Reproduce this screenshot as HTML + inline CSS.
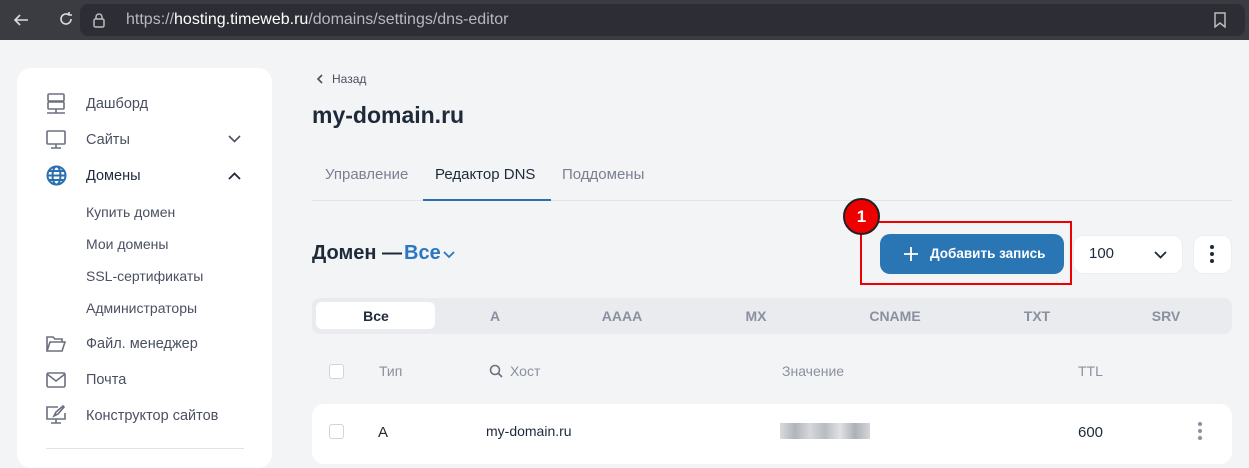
<!DOCTYPE html>
<html><head><meta charset="utf-8"><style>
*{margin:0;padding:0;box-sizing:border-box}
body{width:1249px;height:455px;overflow:hidden;background:#f3f4f6;font-family:"Liberation Sans",sans-serif;position:relative;color:#1e2a3a}
.bar{position:absolute;left:0;top:0;width:1249px;height:40px;background:#3b3b42}
.url{position:absolute;left:80px;top:4px;width:1165px;height:32px;background:#2d2d35;border-radius:8px;color:#b8b8c0;font-size:16px;line-height:32px;padding-left:46px}
.url b{color:#fff;font-weight:normal}
.a{position:absolute;white-space:nowrap}
.side{position:absolute;left:17px;top:68px;width:255px;height:400px;background:#fff;border-radius:14px}
.mi{position:absolute;left:86px;font-size:14.5px;color:#4a5060}
.sub{font-size:14px;color:#4a5060}
.ic{position:absolute;left:46px}
.tab{position:absolute;top:166px;font-size:15px;color:#7a8090}
.filt{position:absolute;left:312px;top:298px;width:920px;height:36px;background:#e9ebef;border-radius:8px}
.ft{position:absolute;top:308px;font-size:14px;color:#8a90a0;font-weight:bold;transform:translateX(-50%)}
.cb{position:absolute;width:15px;height:15px;border:1.5px solid #d0d4dc;border-radius:3px;background:#fff}
.hd{position:absolute;top:363px;font-size:14px;color:#8a90a0}
</style></head><body>
<div class="bar"></div>
<svg class="a" style="left:12px;top:11px" width="18" height="18" viewBox="0 0 18 18" fill="none" stroke="#ddd" stroke-width="1.6"><path d="M16 9H3M8 4L3 9l5 5"/></svg>
<svg class="a" style="left:57px;top:10px" width="18" height="18" viewBox="0 0 18 18" fill="none" stroke="#ddd" stroke-width="1.6"><path d="M14 9a5 5 0 1 1-2-4M12 2v3h3"/></svg>
<div class="url">https://<b>hosting.timeweb.ru</b>/domains/settings/dns-editor</div>
<svg class="a" style="left:92px;top:12px" width="14" height="16" viewBox="0 0 14 16" fill="none" stroke="#bbb" stroke-width="1.5"><rect x="2" y="7" width="10" height="8" rx="1.5"/><path d="M4 7V5a3 3 0 0 1 6 0v2"/></svg>
<svg class="a" style="left:1213px;top:12px" width="14" height="16" viewBox="0 0 14 16" fill="none" stroke="#bbb" stroke-width="1.5"><path d="M2 1h10v14l-5-4-5 4z"/></svg>

<div class="side"></div>
<svg class="ic" style="top:93px" width="20" height="22" viewBox="0 0 20 22" fill="none" stroke="#6a7080" stroke-width="1.6"><rect x="2" y="1" width="16" height="7" rx="1"/><rect x="2" y="9" width="16" height="7" rx="1"/><path d="M10 16v4M1 20h18"/></svg>
<div class="mi" style="top:96px">Дашборд</div>
<svg class="ic" style="top:130px" width="20" height="20" viewBox="0 0 20 20" fill="none" stroke="#6a7080" stroke-width="1.6"><rect x="1" y="1" width="18" height="13" rx="1"/><path d="M10 14v4M5 18h10"/></svg>
<div class="mi" style="top:132px">Сайты</div>
<svg class="a" style="left:228px;top:135px" width="13" height="8" viewBox="0 0 13 8" fill="none" stroke="#4a5060" stroke-width="1.6"><path d="M1 1l5.5 5.5L12 1"/></svg>
<svg class="ic" style="top:165px" width="21" height="21" viewBox="0 0 21 21" fill="none" stroke="#2a6fb0" stroke-width="2"><circle cx="10.5" cy="10.5" r="9"/><ellipse cx="10.5" cy="10.5" rx="4" ry="9"/><path d="M1.5 10.5h18M3 6h15M3 15h15"/></svg>
<div class="mi" style="top:168px;color:#1e2a3a">Домены</div>
<svg class="a" style="left:228px;top:172px" width="13" height="8" viewBox="0 0 13 8" fill="none" stroke="#1e2a3a" stroke-width="1.8"><path d="M1 7l5.5-5.5L12 7"/></svg>
<div class="mi sub" style="top:204px">Купить домен</div>
<div class="mi sub" style="top:236px">Мои домены</div>
<div class="mi sub" style="top:268px">SSL-сертификаты</div>
<div class="mi sub" style="top:300px">Администраторы</div>
<svg class="ic" style="top:335px" width="20" height="18" viewBox="0 0 20 18" fill="none" stroke="#6a7080" stroke-width="1.6"><path d="M1 16V2h6l2 2h7v3M1 16l3-9h15l-3 9z"/></svg>
<div class="mi" style="top:336px">Файл. менеджер</div>
<svg class="ic" style="top:372px" width="20" height="16" viewBox="0 0 20 16" fill="none" stroke="#6a7080" stroke-width="1.6"><rect x="1" y="1" width="18" height="14" rx="1.5"/><path d="M1 2l9 7 9-7"/></svg>
<div class="mi" style="top:372px">Почта</div>
<svg class="ic" style="top:405px" width="20" height="20" viewBox="0 0 20 20" fill="none" stroke="#6a7080" stroke-width="1.6"><path d="M12 2H1v12h18V8M10 14v4M5 18h10M8 11l2-4 7-6 1 1-6 7z"/></svg>
<div class="mi" style="top:408px">Конструктор сайтов</div>
<div class="a" style="left:46px;top:448px;width:198px;height:1px;background:#e0e2e6"></div>

<svg class="a" style="left:316px;top:74px" width="8" height="10" viewBox="0 0 8 10" fill="none" stroke="#4a5060" stroke-width="1.6"><path d="M6 1L2 5l4 4"/></svg>
<div class="a" style="left:332px;top:72px;font-size:12px;color:#4a5060">Назад</div>
<div class="a" style="left:312px;top:102px;font-size:23px;font-weight:bold;color:#1e2a3a">my-domain.ru</div>
<div class="tab" style="left:325px">Управление</div>
<div class="tab" style="left:435px;color:#1e2a3a">Редактор DNS</div>
<div class="tab" style="left:562px">Поддомены</div>
<div class="a" style="left:312px;top:200px;width:920px;height:1px;background:#e2e4e8"></div>
<div class="a" style="left:423px;top:199px;width:128px;height:2px;background:#2a6fb0"></div>

<div class="a" style="left:312px;top:242px;font-size:20px;font-weight:bold;color:#1e2a3a">Домен —</div>
<div class="a" style="left:404px;top:242px;font-size:20px;font-weight:bold;color:#2a78c0">Все</div>
<svg class="a" style="left:443px;top:251px" width="12" height="8" viewBox="0 0 12 8" fill="none" stroke="#2a78c0" stroke-width="1.8"><path d="M1 1l5 5 5-5"/></svg>

<div class="a" style="left:880px;top:234px;width:184px;height:40px;background:#2a76b4;border-radius:10px"></div>
<svg class="a" style="left:904px;top:247px" width="14" height="14" viewBox="0 0 14 14" stroke="#fff" stroke-width="1.8"><path d="M7 0v14M0 7h14"/></svg>
<div class="a" style="left:930px;top:246px;font-size:13.5px;color:#fff;font-weight:bold">Добавить запись</div>
<div class="a" style="left:860px;top:221px;width:212px;height:64px;border:2px solid #e00"></div>
<div class="a" style="left:843px;top:198px;width:37px;height:37px;border-radius:50%;background:#e00;border:2px solid #222;color:#fff;font-weight:bold;font-size:17px;text-align:center;line-height:33px">1</div>

<div class="a" style="left:1073px;top:235px;width:110px;height:39px;background:#fff;border-radius:10px;border:1px solid #eceef1"></div>
<div class="a" style="left:1089px;top:245px;font-size:15px;color:#1e2a3a">100</div>
<svg class="a" style="left:1154px;top:251px" width="13" height="8" viewBox="0 0 13 8" fill="none" stroke="#1e2a3a" stroke-width="1.8"><path d="M1 1l5.5 5.5L12 1"/></svg>
<div class="a" style="left:1193px;top:235px;width:39px;height:39px;background:#fff;border-radius:10px;border:1px solid #eceef1"></div>
<svg class="a" style="left:1209px;top:244px" width="6" height="20" viewBox="0 0 6 20" fill="#1e2a3a"><circle cx="3" cy="3" r="2"/><circle cx="3" cy="10" r="2"/><circle cx="3" cy="17" r="2"/></svg>

<div class="filt"></div>
<div class="a" style="left:316px;top:302px;width:119px;height:27px;background:#fff;border-radius:6px"></div>
<div class="ft" style="left:376px;color:#1e2a3a">Все</div>
<div class="ft" style="left:495px">A</div>
<div class="ft" style="left:622px">AAAA</div>
<div class="ft" style="left:756px">MX</div>
<div class="ft" style="left:895px">CNAME</div>
<div class="ft" style="left:1037px">TXT</div>
<div class="ft" style="left:1166px">SRV</div>

<div class="cb" style="left:329px;top:364px"></div>
<div class="hd" style="left:379px">Тип</div>
<svg class="a" style="left:489px;top:364px" width="14" height="14" viewBox="0 0 14 14" fill="none" stroke="#6a7080" stroke-width="1.6"><circle cx="6" cy="6" r="4.5"/><path d="M9.5 9.5l3.5 3.5"/></svg>
<div class="hd" style="left:510px">Хост</div>
<div class="hd" style="left:782px">Значение</div>
<div class="hd" style="left:1078px">TTL</div>

<div class="a" style="left:312px;top:404px;width:920px;height:60px;background:#fff;border-radius:12px"></div>
<div class="cb" style="left:329px;top:424px"></div>
<div class="a" style="left:378px;top:424px;font-size:15px">A</div>
<div class="a" style="left:486px;top:423px;font-size:14px">my-domain.ru</div>
<div class="a" style="left:780px;top:423px;width:90px;height:16px;background:linear-gradient(90deg,#d4d6da,#a8acb4,#d0d2d6,#b0b4ba,#dcdee2,#a4a8b0,#cfd1d5);opacity:.9"></div>
<div class="a" style="left:1078px;top:424px;font-size:15px">600</div>
<svg class="a" style="left:1197px;top:421px" width="6" height="20" viewBox="0 0 6 20" fill="#8a90a0"><circle cx="3" cy="3" r="2"/><circle cx="3" cy="10" r="2"/><circle cx="3" cy="17" r="2"/></svg>
</body></html>
